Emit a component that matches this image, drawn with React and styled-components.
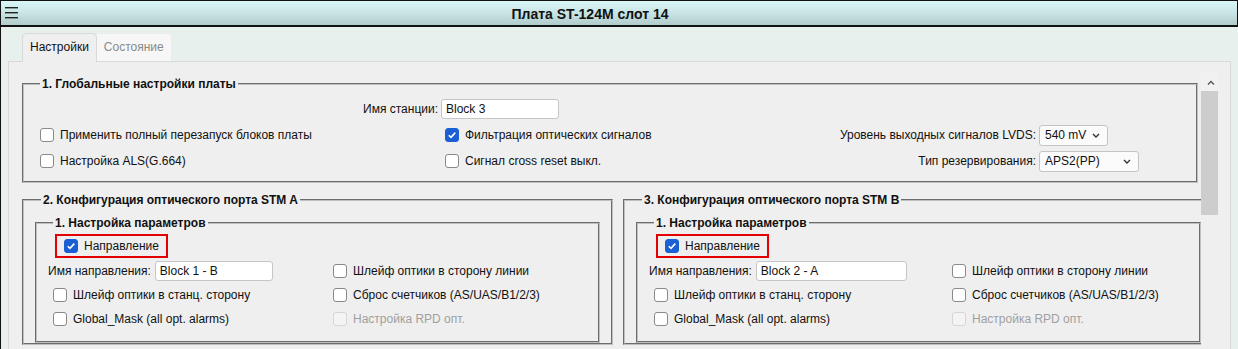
import React from 'react';
import styled, { createGlobalStyle } from 'styled-components';

const GlobalStyle = createGlobalStyle`
  html, body {
    margin: 0;
    padding: 0;
    background: #e8f0ee;
  }
  body {
    font-family: "Liberation Sans", Arial, sans-serif;
    font-size: 12px;
    color: #111;
  }
`;

function MenuIcon() {
  return (
    <svg width="14" height="14" viewBox="0 0 14 14">
      <rect x="0" y="1" width="13" height="1.4" fill="#222" />
      <rect x="0" y="6" width="13" height="1.4" fill="#222" />
      <rect x="0" y="11" width="13" height="1.4" fill="#222" />
    </svg>
  );
}

function Chevron({ up }) {
  return (
    <svg width="8" height="5" viewBox="0 0 8 5">
      <path
        d={up ? 'M1 4.5 L4 1.5 L7 4.5' : 'M1 1 L4 4 L7 1'}
        fill="none"
        stroke={up ? '#555' : '#333'}
        strokeWidth="1.4"
      />
    </svg>
  );
}

function Check({ checked, disabled, children }) {
  return (
    <CheckLabel $disabled={disabled}>
      <Box $checked={checked} $disabled={disabled}>
        {checked && (
          <svg width="10" height="10" viewBox="0 0 10 10">
            <path d="M1.8 5.2 L4 7.4 L8.3 2.6" fill="none" stroke="#fff" strokeWidth="1.6" />
          </svg>
        )}
      </Box>
      <span>{children}</span>
    </CheckLabel>
  );
}

function Select({ value, width }) {
  return (
    <SelectBox style={{ width }}>
      <span>{value}</span>
      <Chevron />
    </SelectBox>
  );
}

function PortConfig({ title, name, inputWidth, colWidth }) {
  return (
    <OuterSet>
      <Legend>{title}</Legend>
      <InnerSet>
        <Legend>1. Настройка параметров</Legend>
        <PortGrid $col={colWidth}>
          <Highlight>
            <Check checked>Направление</Check>
          </Highlight>
          <span />
          <Field>
            <span>Имя направления:</span>
            <TextInput defaultValue={name} style={{ width: inputWidth }} />
          </Field>
          <Check>Шлейф оптики в сторону линии</Check>
          <Indent>
            <Check>Шлейф оптики в станц. сторону</Check>
          </Indent>
          <Check>Сброс счетчиков (AS/UAS/B1/2/3)</Check>
          <Indent>
            <Check>Global_Mask (all opt. alarms)</Check>
          </Indent>
          <Check disabled>Настройка RPD опт.</Check>
        </PortGrid>
      </InnerSet>
    </OuterSet>
  );
}

export default function App() {
  return (
    <>
      <GlobalStyle />
      <Window>
        <TitleBar>
          <MenuButton>
            <MenuIcon />
          </MenuButton>
          <Title>Плата ST-124M слот 14</Title>
        </TitleBar>
        <Body>
          <TabBar>
            <Tab $active>Настройки</Tab>
            <Tab>Состояние</Tab>
          </TabBar>
          <Panel>
            <Content>
              <GlobalSet>
                <Legend>1. Глобальные настройки платы</Legend>
                <GlobalGrid>
                  <RightLabel>Имя станции:</RightLabel>
                  <div>
                    <TextInput defaultValue="Block 3" style={{ width: 118 }} />
                  </div>
                  <span />
                  <span />

                  <Check>Применить полный перезапуск блоков платы</Check>
                  <Check checked>Фильтрация оптических сигналов</Check>
                  <RightLabel>Уровень выходных сигналов LVDS:</RightLabel>
                  <Select value="540 mV" width={69} />

                  <Check>Настройка ALS(G.664)</Check>
                  <Check>Сигнал cross reset выкл.</Check>
                  <RightLabel>Тип резервирования:</RightLabel>
                  <Select value="APS2(PP)" width={100} />
                </GlobalGrid>
              </GlobalSet>
              <PortRow>
                <PortConfig
                  title="2. Конфигурация оптического порта STM A"
                  name="Block 1 - B"
                  inputWidth={118}
                  colWidth={281}
                />
                <PortConfig
                  title="3. Конфигурация оптического порта STM B"
                  name="Block 2 - A"
                  inputWidth={151}
                  colWidth={299}
                />
              </PortRow>
            </Content>
            <Scrollbar>
              <ScrollButton>
                <Chevron up />
              </ScrollButton>
              <Thumb />
            </Scrollbar>
          </Panel>
        </Body>
      </Window>
    </>
  );
}

const Window = styled.div`
  width: 1238px;
  height: 349px;
  box-sizing: border-box;
  border-left: 1px solid #111;
  display: flex;
  flex-direction: column;
  overflow: hidden;
`;

const TitleBar = styled.div`
  height: 24px;
  flex-shrink: 0;
  display: flex;
  align-items: center;
  border-top: 1px solid #111;
  border-bottom: 2px solid #111;
  border-right: 1px solid #111;
  background: linear-gradient(180deg, #dbf6f6 0%, #c6e2e2 55%, #b2cbcb 100%);
`;

const MenuButton = styled.div`
  width: 20px;
  padding-left: 4px;
  display: flex;
  align-items: center;
`;

const Title = styled.div`
  flex: 1;
  text-align: center;
  margin-right: 82px;
  font-weight: bold;
  font-size: 14px;
  padding-top: 2px;
`;

const Body = styled.div`
  flex: 1;
  display: flex;
  flex-direction: column;
  padding: 6px 7px 0 7px;
  min-height: 0;
`;

const TabBar = styled.div`
  display: flex;
  align-items: flex-end;
  height: 29px;
  margin: 0 0 -1px 14px;
  position: relative;
  z-index: 1;
`;

const Tab = styled.div`
  box-sizing: border-box;
  height: ${(p) => (p.$active ? '29px' : '28px')};
  align-self: flex-start;
  padding: 0 7px;
  line-height: 27px;
  border: 1px solid ${(p) => (p.$active ? '#d9d9d9' : '#ececec')};
  border-bottom: none;
  border-radius: ${(p) => (p.$active ? '5px 5px 0 0' : '0 5px 0 0')};
  border-left: ${(p) => (p.$active ? '1px solid #d9d9d9' : 'none')};
  background: ${(p) => (p.$active ? '#efefef' : '#f7f7f7')};
  color: ${(p) => (p.$active ? '#111' : '#8a8a8a')};
`;

const Panel = styled.div`
  flex: 1;
  display: flex;
  min-height: 0;
  background: #efefef;
  border: 1px solid #d9d9d9;
  border-bottom: none;
  padding: 11px 12px 0 13px;
`;

const Content = styled.div`
  flex: 1;
  min-width: 0;
  overflow: hidden;
  padding-top: 4px;
`;

const Scrollbar = styled.div`
  width: 17px;
  flex-shrink: 0;
  display: flex;
  flex-direction: column;
`;

const ScrollButton = styled.div`
  height: 18px;
  display: flex;
  align-items: center;
  justify-content: center;
  background: #f1f1f1;
  padding-left: 2px;
`;

const Thumb = styled.div`
  height: 124px;
  background: #cdcdcd;
`;

const FieldSet = styled.fieldset`
  margin: 0;
  box-sizing: border-box;
  border: 2px groove #c0c0c0;
  min-width: 0;
`;

const Legend = styled.legend`
  font-weight: bold;
  font-size: 12px;
  line-height: 14px;
  padding: 0 2px;
  margin-left: 4px;
`;

const GlobalSet = styled(FieldSet)`
  width: 1176px;
  padding: 6px 12px 8px 12px;
`;

const GlobalGrid = styled.div`
  display: grid;
  grid-template-columns: 405px 1fr auto 145px;
  grid-auto-rows: 24px;
  row-gap: 2px;
  align-items: center;
`;

const RightLabel = styled.span`
  text-align: right;
  padding-right: 3px;
  white-space: nowrap;
`;

const PortRow = styled.div`
  display: flex;
  gap: 10px;
  margin-top: 10px;
`;

const OuterSet = styled(FieldSet)`
  width: 591px;
  flex-shrink: 0;
  padding: 9px 11px 0 11px;

  & > legend {
    margin-left: 6px;
  }
`;

const InnerSet = styled(FieldSet)`
  width: 565px;
  padding: 4px 11px 10px 11px;

  & > legend {
    margin-left: 5px;
  }
`;

const PortGrid = styled.div`
  display: grid;
  grid-template-columns: ${(p) => p.$col}px 1fr;
  grid-template-rows: 24px 25px 24px 24px;
  align-items: center;
`;

const Highlight = styled.div`
  justify-self: start;
  box-sizing: border-box;
  height: 24px;
  margin-left: 7px;
  padding: 0 7px 0 3px;
  border: 2px solid #e40000;
  display: flex;
  align-items: center;
`;

const Indent = styled.div`
  padding-left: 1px;
`;

const Field = styled.div`
  display: flex;
  align-items: center;
  gap: 4px;
`;

const CheckLabel = styled.label`
  display: flex;
  align-items: center;
  gap: 6px;
  white-space: nowrap;
  color: ${(p) => (p.$disabled ? '#a0a0a0' : '#111')};
`;

const Box = styled.span`
  box-sizing: border-box;
  width: 14px;
  height: 14px;
  margin-left: 4px;
  flex-shrink: 0;
  display: flex;
  align-items: center;
  justify-content: center;
  border-radius: 3px;
  border: 1px solid
    ${(p) => (p.$checked ? '#1b5fd4' : p.$disabled ? '#d6d6d6' : '#8a8a8a')};
  background: ${(p) => (p.$checked ? '#1b5fd4' : p.$disabled ? '#f4f4f4' : '#fff')};
`;

const TextInput = styled.input`
  box-sizing: border-box;
  height: 20px;
  padding: 0 4px;
  border: 1px solid #c6c6c6;
  border-radius: 3px;
  background: #fff;
  font-family: "Liberation Sans", Arial, sans-serif;
  font-size: 12px;
  color: #111;
  outline: none;
`;

const SelectBox = styled.div`
  box-sizing: border-box;
  height: 21px;
  display: flex;
  align-items: center;
  justify-content: space-between;
  padding: 0 7px 0 5px;
  border: 1px solid #c4c4c4;
  border-radius: 3px;
  background: #fbfbfb;
`;
